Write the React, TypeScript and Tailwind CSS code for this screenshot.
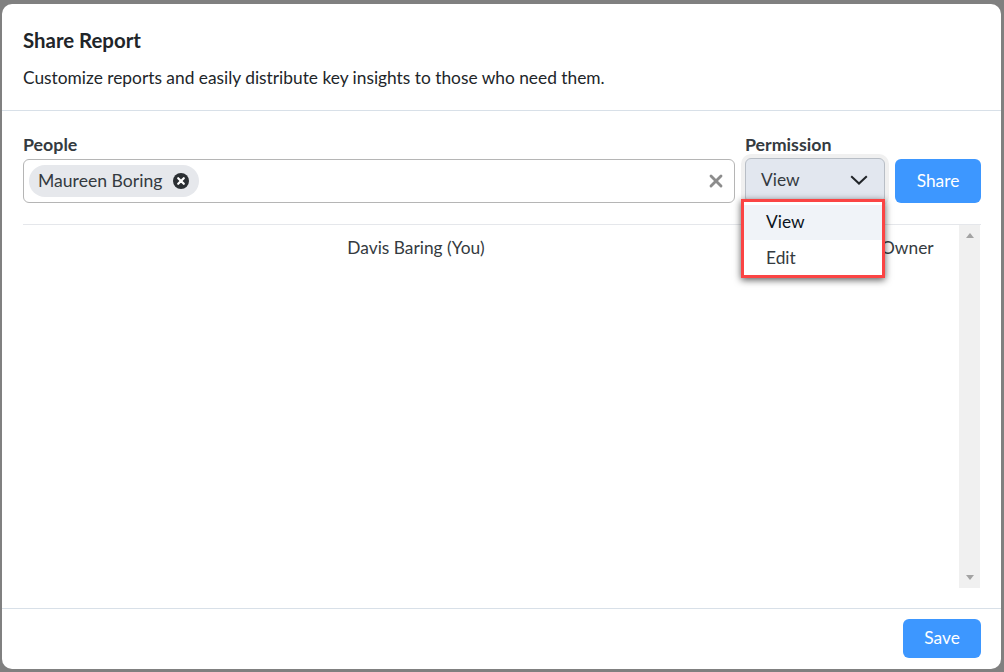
import { X } from 'lucide-react';

export default function App() {
  return (
    <div className="h-[672px] w-[1004px] overflow-hidden bg-[#808080] pt-[4px] pb-[3px] pl-[2px] pr-[3px] font-['Lato',sans-serif] text-[#212529]">
      <div className="flex h-full flex-col rounded-[10px] bg-white">
        <div className="h-[107px] shrink-0 border-b border-[#d8e0e8] px-[21px] pt-[23px]">
          <h1 className="text-[20.4px] font-bold leading-[26px] text-[#212529]">Share Report</h1>
          <p className="mt-[13px] text-[17.33px] leading-[24px]">
            Customize reports and easily distribute key insights to those who need them.
          </p>
        </div>

        <div className="flex min-h-0 flex-1 flex-col pl-[21px] pr-[20px]">
          <div className="flex h-[114px] shrink-0 gap-[10px] border-b border-[#e5e7eb] pt-[21px]">
            <div className="w-[712px]">
              <label className="block text-[17.8px] font-bold leading-[24px] text-[#343a40]">People</label>
              <div className="mt-[3px] flex h-[44px] items-center justify-between rounded-[6px] border border-[#b5b5b5] pl-[5px] pr-[8px]">
                <span className="flex h-[32px] items-center gap-[11px] rounded-full bg-[#e6e8ec] pl-[9px] pr-[10px] text-[17.6px] text-[#343a40]">
                  Maureen Boring
                  <svg viewBox="0 0 16 16" className="h-[16px] w-[16px]">
                    <circle cx="8" cy="8" r="8" fill="#2b2f33" />
                    <path d="M5.2 5.2l5.6 5.6M10.8 5.2l-5.6 5.6" stroke="#fff" strokeWidth="2.2" strokeLinecap="round" />
                  </svg>
                </span>
                <X className="h-[20px] w-[20px] text-[#8c8c8c]" strokeWidth={3.4} />
              </div>
            </div>

            <div className="relative w-[140px]">
              <label className="block text-[17.8px] font-bold leading-[24px] text-[#343a40]">Permission</label>
              <div className="mt-[2px] flex h-[45px] items-center justify-between rounded-[6px] border border-[#b8bec6] bg-[#e2e7ef] pb-[2px] pl-[15px] pr-[16px] text-[17.33px] text-[#343a40] shadow-[0_0_0_4px_#f0f0f0]">
                View
                <svg viewBox="0 0 18 10" className="h-[10px] w-[18px]" fill="none">
                  <path d="M1.2 1.2L9 8.6l7.8-7.4" stroke="#212529" strokeWidth="2" />
                </svg>
              </div>
              <div className="absolute left-[-4px] top-[67px] z-10 w-[144px] border-[3px] border-[#fb4444] bg-white pt-[3px] text-[17.33px] shadow-[0_2px_7px_rgba(0,0,0,0.65)]">
                <div className="flex h-[35px] items-center bg-[#f0f3f8] pb-[2px] pl-[22px] text-[#0b1320]">View</div>
                <div className="flex h-[35px] items-center pl-[22px] text-[#343a40]">Edit</div>
              </div>
            </div>

            <button className="mt-[27px] h-[44px] w-[86px] rounded-[6px] bg-[#3d97ff] text-[17.33px] text-white">Share</button>
          </div>

          <div className="flex h-[363px] shrink-0">
            <div className="flex h-[46px] flex-1 text-[17.33px] text-[#343a40]">
              <div className="flex w-[786px] items-start justify-center pt-[10px]">Davis Baring (You)</div>
              <div className="flex-1 pt-[10px] pl-[72px]">Owner</div>
            </div>
            <div className="mr-[1px] flex w-[21px] flex-col items-center justify-between bg-[#f0f0f0] py-[8px]">
              <div className="h-0 w-0 border-x-[4.5px] border-b-[5px] border-x-transparent border-b-[#a3a3a3]" />
              <div className="h-0 w-0 border-x-[4.5px] border-t-[5px] border-x-transparent border-t-[#a3a3a3]" />
            </div>
          </div>
        </div>

        <div className="mt-[19px] flex h-[61px] shrink-0 items-start justify-end border-t border-[#d8e0e8] pr-[20px] pt-[10px]">
          <button className="h-[39px] w-[78px] rounded-[6px] bg-[#3d97ff] pb-[2px] text-[17.33px] text-white">Save</button>
        </div>
      </div>
    </div>
  );
}
